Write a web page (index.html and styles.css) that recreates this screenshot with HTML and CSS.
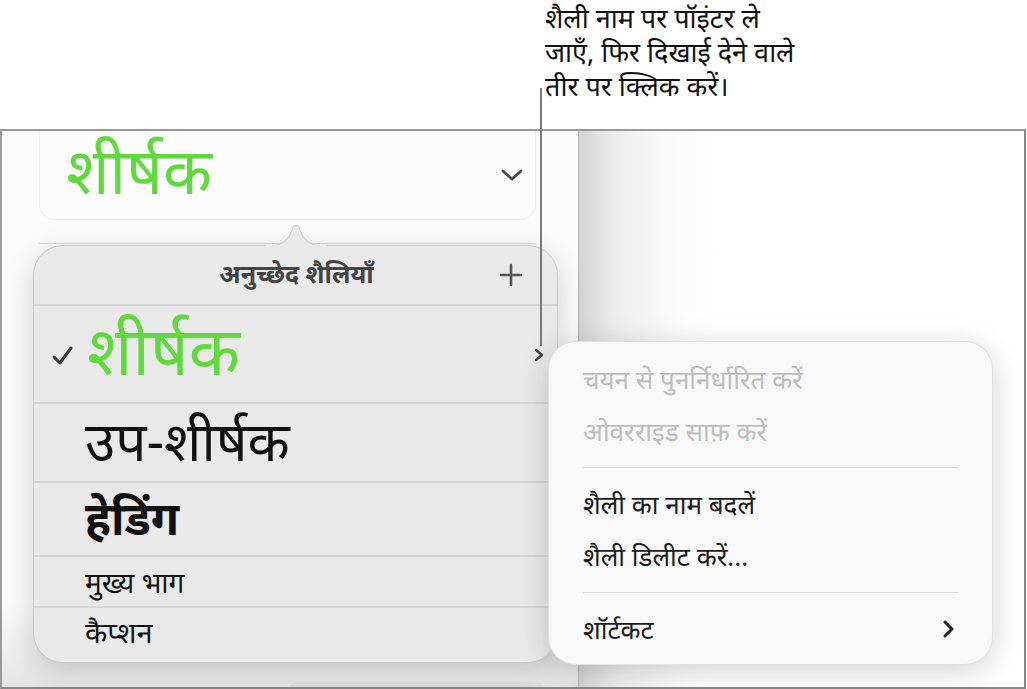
FILE: index.html
```html
<!DOCTYPE html>
<html lang="hi">
<head>
    <meta charset="UTF-8">
    <meta name="viewport" content="width=device-width, initial-scale=1.0">
    <title>अनुच्छेद शैलियाँ</title>
    <link rel="stylesheet" href="styles.css">
</head>
<body>
<div class="page">
    <div class="callout">
        <p>शैली नाम पर पॉइंटर ले<br>जाएँ, फिर दिखाई देने वाले<br>तीर पर क्लिक करें।</p>
    </div>
    <div class="callout-line"></div>

    <div class="frame">
        <div class="sidebar">
            <div class="style-card">
                <span class="style-name">शीर्षक</span>
                <svg class="chev-down" width="22" height="14" viewBox="0 0 22 14"><path d="M2 3 L11 11 L20 3" fill="none" stroke="#444" stroke-width="2.6" stroke-linecap="round" stroke-linejoin="round"/></svg>
            </div>
            <div class="sidebar-rule"></div>
            <div class="bottom-tab"></div>
        </div>
        <div class="canvas"></div>
    </div>

    <!-- पॉपओवर -->
    <div class="popover">
        <svg class="pop-arrow" width="60" height="26" viewBox="0 0 60 26"><path d="M0 25 C14 25 18 22 24 14 L27 6 C28.5 3.5 31.5 3.5 33 6 L36 14 C42 22 46 25 60 25 Z" fill="#e9e9e9" stroke="#c8c8c8" stroke-width="1"/><rect x="0" y="24" width="60" height="3" fill="#e9e9e9"/></svg>
        <div class="pop-header">
            <span>अनुच्छेद शैलियाँ</span>
            <svg class="plus" width="24" height="24" viewBox="0 0 24 24"><path d="M12 2 V22 M2 12 H22" stroke="#555" stroke-width="2.6" stroke-linecap="round"/></svg>
        </div>
        <div class="row row-title">
            <svg class="check" width="24" height="22" viewBox="0 0 24 22"><path d="M3 12 L9 18 L20 3" fill="none" stroke="#3a3a3a" stroke-width="3" stroke-linecap="round" stroke-linejoin="round"/></svg>
            <span>शीर्षक</span>
            <svg class="row-arrow" width="10" height="14" viewBox="0 0 10 14"><path d="M2 2 L8 7 L2 12" fill="none" stroke="#444" stroke-width="2.4" stroke-linecap="round" stroke-linejoin="round"/></svg>
        </div>
        <div class="row row-subtitle"><span>उप-शीर्षक</span></div>
        <div class="row row-heading"><span>हेडिंग</span></div>
        <div class="row row-body"><span>मुख्य भाग</span></div>
        <div class="row row-caption"><span>कैप्शन</span></div>
    </div>

    <!-- संदर्भ मेनू -->
    <div class="menu">
        <div class="menu-item disabled">चयन से पुनर्निर्धारित करें</div>
        <div class="menu-item disabled">ओवरराइड साफ़ करें</div>
        <div class="menu-sep"></div>
        <div class="menu-item">शैली का नाम बदलें</div>
        <div class="menu-item">शैली डिलीट करें...</div>
        <div class="menu-sep"></div>
        <div class="menu-item">
            <span>शॉर्टकट</span>
            <svg width="14" height="20" viewBox="0 0 14 20"><path d="M3 3 L10 10 L3 17" fill="none" stroke="#222" stroke-width="3" stroke-linecap="round" stroke-linejoin="round"/></svg>
        </div>
    </div>
</div>
</body>
</html>
```

FILE: styles.css
```css
body {
    margin: 0;
    background-color: #fff;
    font-family: "Noto Sans", "Noto Sans Devanagari", "Lohit Devanagari", sans-serif;
    color: #1a1a1a;
}
.page {
    position: relative;
    width: 1027px;
    height: 689px;
    overflow: hidden;
}

/* Подпись сверху */
.callout {
    height: 129px;
    padding-left: 545px;
    box-sizing: border-box;
}
.callout p {
    margin: 0;
    padding-top: 1px;
    font-size: 27px;
    line-height: 34px;
    color: #111;
}
.callout-line {
    position: absolute;
    left: 540px;
    top: 88px;
    width: 2px;
    height: 258px;
    background-color: #7a7a7a;
    z-index: 5;
}

/* Рамка окна */
.frame {
    display: flex;
    height: 560px;
    border: 2px solid #999;
    border-bottom-color: #888;
    border-right-color: #888;
    box-sizing: border-box;
    width: 1026px;
}
.sidebar {
    position: relative;
    width: 577px;
    background-color: #fafafa;
    border-right: 1px solid #b5b5b5;
    padding: 0 42px 0 37px;
    box-sizing: border-box;
    background-image: linear-gradient(to bottom, #fafafa 85%, #e4e4e4 100%);
}
.style-card {
    display: flex;
    align-items: center;
    justify-content: space-between;
    height: 88px;
    padding: 0 12px 0 26px;
    background-color: #fcfcfc;
    border: 1px solid #f0f0f0;
    border-top: none;
    border-radius: 0 0 16px 16px;
}
.style-name {
    font-size: 64px;
    color: #5fd93b;
    line-height: 1;
    margin-top: -10px;
}
.sidebar-rule {
    margin-top: 23px;
    height: 1px;
    background-color: #d6d6d6;
}
.bottom-tab {
    position: absolute;
    left: 288px;
    bottom: 0;
    width: 252px;
    height: 5px;
    background-color: #dedede;
    border-radius: 6px 6px 0 0;
}
.canvas {
    flex: 1;
    background-image: linear-gradient(to right, #d2d2d2 0, #ececec 35px, #fbfbfb 95px, #fff 140px);
}

/* Поповер стилей */
.popover {
    position: absolute;
    left: 33px;
    top: 245px;
    width: 525px;
    height: 418px;
    display: flex;
    flex-direction: column;
    background-color: #e9e9e9;
    border: 1px solid #c9c9c9;
    border-radius: 30px;
    box-sizing: border-box;
    box-shadow: 0 8px 28px rgba(0, 0, 0, 0.16);
    z-index: 3;
}
.pop-arrow {
    position: absolute;
    left: 232px;
    top: -25px;
}
.pop-header {
    position: relative;
    height: 58px;
    display: flex;
    align-items: center;
    justify-content: center;
    font-size: 25px;
    font-weight: bold;
    color: #444;
    border-bottom: 2px solid #d5d5d5;
    flex-shrink: 0;
}
.pop-header span {
    margin-top: -4px;
    margin-left: 2px;
    line-height: 1;
}
.plus {
    position: absolute;
    right: 34px;
    top: 17px;
}
.row {
    display: flex;
    align-items: center;
    padding-left: 51px;
    border-bottom: 2px solid #d5d5d5;
    box-sizing: border-box;
    flex-shrink: 0;
    color: #111;
    position: relative;
    line-height: 1;
}
.row-title {
    height: 98px;
    padding-left: 17px;
}
.row-title span {
    font-size: 67px;
    color: #5fd93b;
    margin-left: 12px;
    margin-top: -10px;
}
.check {
    margin-top: 4px;
}
.row-arrow {
    position: absolute;
    right: 13px;
    top: 42px;
}
.row-subtitle {
    height: 79px;
    font-size: 55px;
}
.row-subtitle span {
    margin-top: -6px;
}
.row-heading {
    height: 74px;
    font-size: 46px;
    font-weight: bold;
}
.row-heading span {
    margin-top: -4px;
}
.row-body {
    height: 51px;
    font-size: 28px;
}
.row-caption {
    flex: 1;
    border-bottom: none;
    font-size: 29px;
    padding-bottom: 8px;
}

/* Контекстное меню */
.menu {
    position: absolute;
    left: 548px;
    top: 341px;
    width: 445px;
    height: 324px;
    padding: 11px 0;
    box-sizing: border-box;
    background-color: #f8f8f8;
    border: 1px solid #e0e0e0;
    border-radius: 28px;
    box-shadow: 0 6px 30px rgba(0, 0, 0, 0.18);
    z-index: 4;
}
.menu-item {
    display: flex;
    align-items: center;
    justify-content: space-between;
    height: 52px;
    padding: 0 36px 0 34px;
    font-size: 26px;
    line-height: 1;
    color: #1c1c1c;
}
.menu-item.disabled {
    color: #bdbdbd;
}
.menu-sep {
    height: 1px;
    margin: 10px 34px;
    background-color: #dcdcdc;
}
```
